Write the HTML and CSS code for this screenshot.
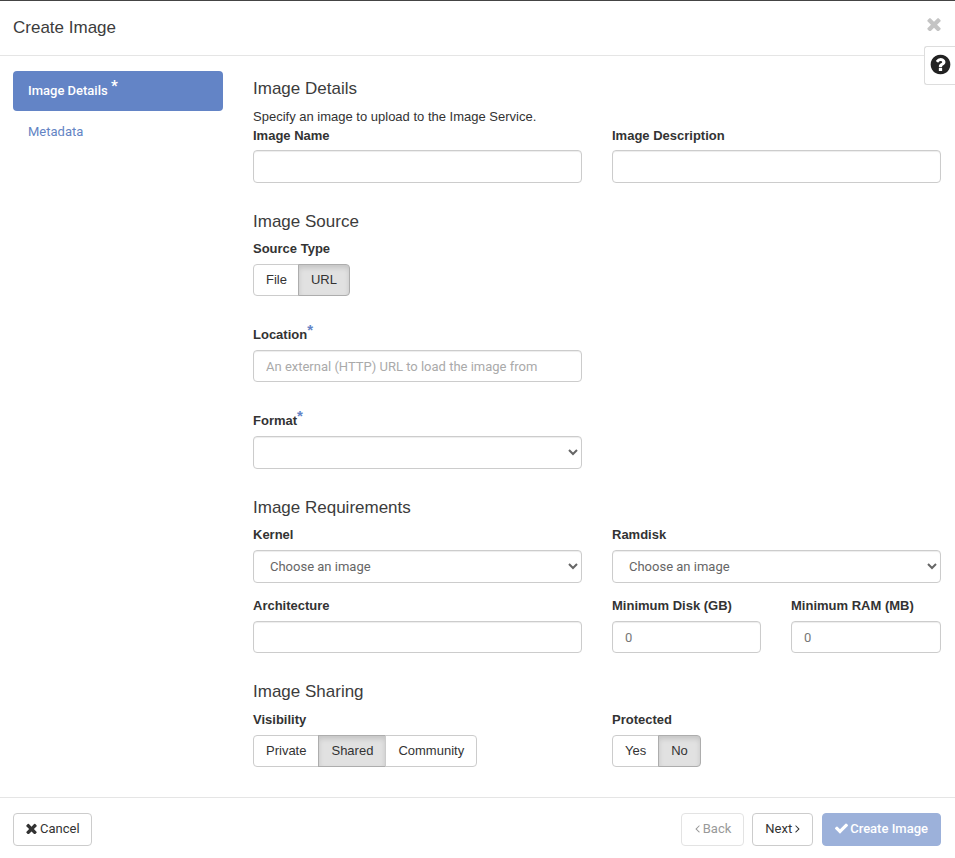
FILE: index.html
```html
<!DOCTYPE html>
<html>
<head>
	<meta charset="UTF-8">
	<title>Create Image</title>
	<link rel="stylesheet" href="styles.css">
</head>
<body>
	<div class="modal">
		<div class="modal_header">
			<h1>Create Image</h1>
			<svg class="close_icon" viewBox="270 270 1250 1250"><path d="M1490 1322q0 40-28 68l-136 136q-28 28-68 28t-68-28l-294-294-294 294q-28 28-68 28t-68-28l-136-136q-28-28-28-68t28-68l294-294-294-294q-28-28-28-68t28-68l136-136q28-28 68-28t68 28l294 294 294-294q28-28 68-28t68 28l136 136q28 28 28 68t-28 68l-294 294 294 294q28 28 28 68z"/></svg>
		</div>

		<div class="help_tab">
			<svg viewBox="0 0 1792 1792"><path d="M1024 1376v-192q0-14-9-23t-23-9h-192q-14 0-23 9t-9 23v192q0 14 9 23t23 9h192q14 0 23-9t9-23zm256-672q0-88-55.5-163t-138.5-116-170-41q-243 0-371 213-15 24 8 42l132 100q7 6 19 6 16 0 25-12 53-68 86-92 34-24 86-24 48 0 85.5 26t37.5 59q0 38-20 61t-68 45q-63 28-115.5 86.5t-52.5 125.5v36q0 14 9 23t23 9h192q14 0 23-9t9-23q0-19 21.5-49.5t54.5-49.5q32-18 49-28.5t46-35 44.5-48 28-60.5 12.5-81zm384 192q0 209-103 385.5t-279.5 279.5-385.5 103-385.5-103-279.5-279.5-103-385.5 103-385.5 279.5-279.5 385.5-103 385.5 103 279.5 279.5 103 385.5z"/></svg>
		</div>

		<div class="modal_body">
			<div class="side_nav">
				<a class="nav_item nav_active">Image Details <span class="nav_star">*</span></a>
				<a class="nav_item">Metadata</a>
			</div>

			<div class="form_area">
				<h2 class="first_title">Image Details</h2>
				<p class="help_text">Specify an image to upload to the Image Service.</p>
				<div class="row">
					<div class="field">
						<label>Image Name</label>
						<input type="text">
					</div>
					<div class="field">
						<label>Image Description</label>
						<input type="text">
					</div>
				</div>

				<h2>Image Source</h2>
				<label>Source Type</label>
				<div class="btn_group">
					<span class="group_btn file_btn">File</span>
					<span class="group_btn group_active">URL</span>
				</div>

				<div class="half spaced">
					<label class="req_label">Location<span class="req">*</span></label>
					<input type="text" placeholder="An external (HTTP) URL to load the image from">
				</div>

				<div class="half spaced">
					<label class="req_label">Format<span class="req">*</span></label>
					<select><option></option></select>
				</div>

				<h2>Image Requirements</h2>
				<div class="row">
					<div class="field">
						<label class="high_label">Kernel</label>
						<select><option>Choose an image</option></select>
					</div>
					<div class="field">
						<label class="high_label">Ramdisk</label>
						<select><option>Choose an image</option></select>
					</div>
				</div>
				<div class="row row_next">
					<div class="field">
						<label class="high_label">Architecture</label>
						<input type="text">
					</div>
					<div class="field sub_row">
						<div class="field sub_first">
							<label class="high_label">Minimum Disk (GB)</label>
							<input class="num_input" type="text" value="0">
						</div>
						<div class="field">
							<label class="high_label">Minimum RAM (MB)</label>
							<input class="num_input" type="text" value="0">
						</div>
					</div>
				</div>

				<h2 class="wide_title">Image Sharing</h2>
				<div class="row">
					<div class="field">
						<label>Visibility</label>
						<div class="btn_group">
							<span class="group_btn">Private</span>
							<span class="group_btn group_active">Shared</span>
							<span class="group_btn">Community</span>
						</div>
					</div>
					<div class="field">
						<label>Protected</label>
						<div class="btn_group">
							<span class="group_btn">Yes</span>
							<span class="group_btn group_active">No</span>
						</div>
					</div>
				</div>
			</div>
		</div>

		<div class="modal_footer">
			<a class="btn btn_cancel">
				<svg class="btn_icon" viewBox="270 270 1250 1250"><path d="M1490 1322q0 40-28 68l-136 136q-28 28-68 28t-68-28l-294-294-294 294q-28 28-68 28t-68-28l-136-136q-28-28-28-68t28-68l294-294-294-294q-28-28-28-68t28-68l136-136q28-28 68-28t68 28l294 294 294-294q28-28 68-28t68 28l136 136q28 28 28 68t-28 68l-294 294 294 294q28 28 28 68z"/></svg>
				Cancel
			</a>
			<div class="footer_right">
				<a class="btn btn_disabled">
					<svg class="btn_angle" viewBox="0 0 640 1792"><path d="M627 544q0 13-10 23l-393 393 393 393q10 10 10 23t-10 23l-50 50q-10 10-23 10t-23-10l-466-466q-10-10-10-23t10-23l466-466q10-10 23-10t23 10l50 50q10 10 10 23z"/></svg>
					Back
				</a>
				<a class="btn">
					Next
					<svg class="btn_angle" viewBox="0 0 640 1792"><path d="M595 960q0 13-10 23l-466 466q-10 10-23 10t-23-10l-50-50q-10-10-10-23t10-23l393-393-393-393q-10-10-10-23t10-23l50-50q10-10 23-10t23 10l466 466q10 10 10 23z"/></svg>
				</a>
				<a class="btn btn_primary">
					<svg class="check_icon" viewBox="121 165 1550 1550"><path d="M1671 566q0 40-28 68l-724 724-136 136q-28 28-68 28t-68-28l-136-136-362-362q-28-28-28-68t28-68l136-136q28-28 68-28t68 28l294 295 656-657q28-28 68-28t68 28l136 136q28 28 28 68z"/></svg>
					Create Image
				</a>
			</div>
		</div>
	</div>
</body>
</html>
```

FILE: styles.css
```css
* {
	box-sizing: border-box;
}

body {
	margin: 0;
	background: #fff;
	color: #333;
	font-family: Roboto, "Liberation Sans", sans-serif;
	font-size: 13px;
	line-height: 18px;
}

.modal {
	position: relative;
	height: 858px;
	border-top: 1px solid #444;
	display: flex;
	flex-direction: column;
}

/* header */
.modal_header {
	height: 55px;
	border-bottom: 1px solid #e5e5e5;
	padding: 0 14px 0 13px;
	flex: none;
	display: flex;
	justify-content: space-between;
	align-items: center;
}

h1 {
	margin: 0;
	color: #3c3c3c;
	font-family: "Liberation Sans", sans-serif;
	font-size: 17px;
	font-weight: normal;
}

.close_icon {
	width: 14px;
	height: 14px;
	margin-bottom: 8px;
	fill: #c4c4c4;
}

.help_tab {
	position: absolute;
	top: 45px;
	right: 0;
	width: 31px;
	height: 39px;
	background: #fff;
	border: 1px solid #ddd;
	border-right: 0;
	border-radius: 3px 0 0 3px;
	padding: 6px 0 0 4px;
}

.help_tab svg {
	display: block;
	width: 23px;
	height: 23px;
	fill: #222;
}

/* body */
.modal_body {
	flex: 1;
	display: flex;
	padding: 15px 14px 0 13px;
}

.side_nav {
	width: 210px;
	flex: none;
	margin-right: 30px;
}

.nav_item {
	display: block;
	height: 40px;
	padding: 12px 15px;
	color: #6384c4;
	border-radius: 4px;
}

.nav_active {
	padding-top: 10px;
	background: #6384c6;
	color: #fff;
	font-weight: 500;
}

.nav_star {
	position: relative;
	top: -4px;
	font-size: 15px;
	font-weight: bold;
}

.form_area {
	flex: 1;
	min-width: 0;
}

h2 {
	margin: 29px 0 8px;
	height: 20px;
	color: #3c3c3c;
	font-family: "Liberation Sans", sans-serif;
	font-size: 17px;
	line-height: 20px;
	font-weight: normal;
}

.first_title {
	margin-top: 8px;
	margin-bottom: 9px;
}

.wide_title {
	margin-bottom: 9px;
}

.help_text {
	margin: 0;
	height: 19px;
	font-family: "Liberation Sans", sans-serif;
	font-size: 13px;
	line-height: 17px;
}

label {
	display: block;
	height: 18px;
	margin-bottom: 5px;
	color: #333;
	font-family: "Liberation Sans", sans-serif;
	font-weight: bold;
}

.req_label {
	margin-bottom: 7px;
}

.high_label {
	margin-bottom: 6px;
}

.req {
	position: relative;
	top: -4px;
	color: #6384c6;
	font-size: 15px;
	font-weight: bold;
}

.row {
	display: flex;
	gap: 30px;
}

.row_next {
	margin-top: 14px;
}

.row_next input, .half input {
	height: 32px;
}

.field {
	flex: 1;
	min-width: 0;
}

.sub_row {
	display: flex;
	gap: 30px;
}

.sub_first {
	flex: 0 0 149px;
}

.half {
	width: 329px;
}

.spaced {
	margin-top: 29px;
}

input, select {
	display: block;
	width: 100%;
	height: 33px;
	padding: 6px 12px;
	background: #fff;
	border: 1px solid #ccc;
	border-radius: 4px;
	color: #666;
	font-family: Roboto, "Liberation Sans", sans-serif;
	font-size: 13px;
	box-shadow: inset 0 1px 1px rgba(0, 0, 0, .075);
}

input::placeholder {
	color: #aaa;
}

.num_input {
	color: #777;
}

.btn_group {
	display: flex;
	width: fit-content;
	margin-top: 6px;
}

.group_btn {
	height: 32px;
	padding: 6px 12px;
	background: #fff;
	border: 1px solid #ccc;
	margin-left: -1px;
	color: #333;
	font-family: "Liberation Sans", sans-serif;
}

.group_btn:first-child {
	margin-left: 0;
	border-radius: 4px 0 0 4px;
}

.group_btn:last-child {
	border-radius: 0 4px 4px 0;
}

.file_btn {
	padding-right: 11px;
}

.group_active {
	background: #e1e1e1;
	border-color: #adadad;
	box-shadow: inset 0 3px 5px rgba(0, 0, 0, .125);
}

/* footer */
.modal_footer {
	height: 61px;
	flex: none;
	border-top: 1px solid #e5e5e5;
	padding: 15px 14px 0 13px;
	display: flex;
	justify-content: space-between;
	align-items: flex-start;
}

.footer_right {
	display: flex;
	gap: 8px;
}

.btn {
	display: inline-flex;
	align-items: center;
	gap: 3px;
	height: 33px;
	padding: 0 12px 2px;
	background: #fff;
	border: 1px solid #ccc;
	border-radius: 4px;
	color: #333;
}

.btn_cancel {
	padding-right: 11px;
}

.btn_icon {
	width: 11px;
	height: 11px;
	fill: currentColor;
}

.check_icon {
	width: 13px;
	height: 13px;
	fill: currentColor;
}

.btn_angle {
	width: 5px;
	height: 13px;
	fill: currentColor;
}

.btn_disabled {
	padding-left: 13px;
	border-color: #e3e3e3;
	color: #999;
}

.btn_primary {
	margin-left: 1px;
	gap: 2px;
	background: #9cb1da;
	border-color: #9cb1da;
	color: #fff;
	font-weight: 500;
}
```
